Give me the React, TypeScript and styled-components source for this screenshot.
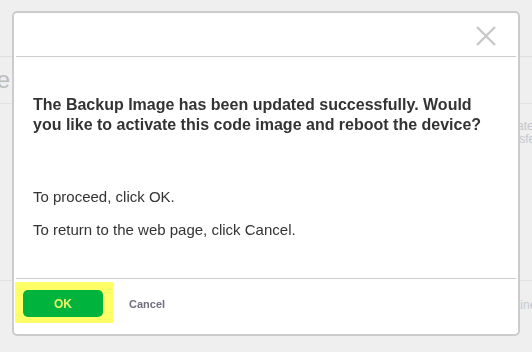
import React from "react";
import styled, { createGlobalStyle } from "styled-components";

const GlobalStyle = createGlobalStyle`
  html, body {
    margin: 0;
    padding: 0;
    background: #efefef;
    font-family: "Liberation Sans", Arial, sans-serif;
  }
`;

const App: React.FC = () => {
  return (
    <>
      <GlobalStyle />
      <Page>
        <TopBar />
        <TitleRow>
          <TitleClip>
            <PageTitle>Backup Image</PageTitle>
          </TitleClip>
        </TitleRow>
        <TableRow>
          <SideCell />
          <StatusCell>
            <span>Update</span>
            <span>Transfer</span>
          </StatusCell>
        </TableRow>
        <FootRow>
          <SideCell />
          <StatusCell>
            <span>Routine</span>
          </StatusCell>
        </FootRow>
      </Page>

      <Dialog role="dialog">
        <Header>
          <CloseButton aria-label="Close">
            <svg width="20" height="20" viewBox="0 0 20 20">
              <path
                d="M1 1 L19 19 M19 1 L1 19"
                stroke="#c8c8c8"
                strokeWidth="2.4"
                fill="none"
              />
            </svg>
          </CloseButton>
        </Header>

        <Body>
          <Message>
            The Backup Image has been updated successfully. Would you like to
            activate this code image and reboot the device?
          </Message>
          <Hint>To proceed, click OK.</Hint>
          <Hint>To return to the web page, click Cancel.</Hint>
        </Body>

        <Footer>
          <Highlight>
            <OkButton>OK</OkButton>
          </Highlight>
          <CancelButton>Cancel</CancelButton>
        </Footer>
      </Dialog>
    </>
  );
};

export default App;

/* page behind the dialog */

const Page = styled.div`
  height: 352px;
  overflow: hidden;
  background: #efefef;
  color: #bdbdbd;
`;

const TopBar = styled.div`
  height: 56px;
  border-bottom: 1px solid #dedede;
`;

const TitleRow = styled.div`
  height: 46px;
  display: flex;
  align-items: center;
  border-bottom: 1px solid #e2e2e2;
`;

const TitleClip = styled.div`
  width: 10px;
  display: flex;
  justify-content: flex-end;
`;

const PageTitle = styled.h1`
  margin: 0;
  font-size: 24px;
  font-weight: normal;
  white-space: nowrap;
  color: #bcbcbc;
`;

const TableRow = styled.div`
  height: 176px;
  display: flex;
  border-bottom: 1px solid #e2e2e2;
`;

const FootRow = styled.div`
  display: flex;
  padding-top: 2px;
`;

const SideCell = styled.div`
  width: 495px;
  flex-shrink: 0;
`;

const StatusCell = styled.div`
  display: flex;
  flex-direction: column;
  padding-top: 16px;
  font-size: 12px;
  line-height: 13px;
  color: #c4c8ce;
  white-space: nowrap;
`;

/* dialog */

const Dialog = styled.div`
  position: fixed;
  top: 11px;
  left: 12px;
  width: 508px;
  height: 325px;
  box-sizing: border-box;
  background: #ffffff;
  border: 2px solid #cccccc;
  border-radius: 5px;
  display: flex;
  flex-direction: column;
`;

const Header = styled.div`
  height: 43px;
  margin: 0 2px;
  border-bottom: 1px solid #cccccc;
  display: flex;
  justify-content: flex-end;
  align-items: flex-start;
`;

const CloseButton = styled.button`
  margin: 13px 20px 0 0;
  padding: 0;
  width: 20px;
  height: 20px;
  border: none;
  background: none;
  cursor: pointer;
  display: flex;
`;

const Body = styled.div`
  flex: 1;
  padding: 38px 26px 0 19px;
  color: #333333;
`;

const Message = styled.p`
  margin: 0 0 52px;
  font-size: 16px;
  font-weight: bold;
  line-height: 20px;
`;

const Hint = styled.p`
  margin: 0 0 13px;
  font-size: 15px;
  line-height: 20px;
`;

const Footer = styled.div`
  height: 52px;
  margin: 0 2px;
  padding: 3px 0 0;
  border-top: 1px solid #cccccc;
  display: flex;
  align-items: flex-start;
  gap: 16px;
`;

const Highlight = styled.div`
  margin-left: -1px;
  padding: 8px 10px 6px 8px;
  background: #ffff66;
  display: flex;
`;

const OkButton = styled.button`
  width: 80px;
  height: 27px;
  padding: 0;
  border: none;
  border-radius: 5px;
  background: #00b33c;
  color: #eef26a;
  font-family: "Liberation Sans", Arial, sans-serif;
  font-size: 12px;
  font-weight: bold;
  cursor: pointer;
`;

const CancelButton = styled.button`
  margin-top: 8px;
  height: 27px;
  padding: 0;
  border: none;
  background: none;
  color: #6f6f80;
  font-family: "Liberation Sans", Arial, sans-serif;
  font-size: 11px;
  font-weight: bold;
  cursor: pointer;
`;
